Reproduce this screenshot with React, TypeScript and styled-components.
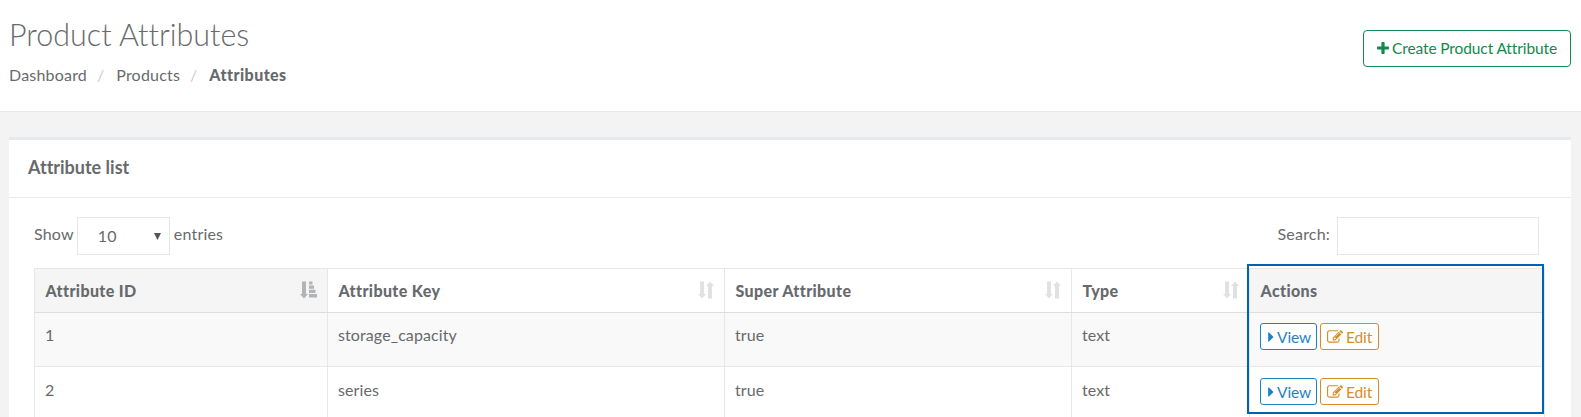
import React from "react";
import styled, { createGlobalStyle } from "styled-components";

const GlobalStyle = createGlobalStyle`
  *, *::before, *::after { box-sizing: border-box; }
  html, body { margin: 0; height: 100%; overflow: hidden; }
  body {
    background: #f3f3f4;
    color: #676a6c;
    font-family: Lato, "Liberation Sans", sans-serif;
    font-size: 16px;
    line-height: 20px;
    font-variant-ligatures: none;
  }
  #root { height: 100%; overflow: hidden; }
`;

const Page = styled.div`
  display: flex;
  flex-direction: column;
  height: 100vh;
  overflow: hidden;
`;

const Header = styled.header`
  display: flex;
  flex: none;
  justify-content: space-between;
  height: 112px;
  padding: 0 10px 0 9px;
  background: #fff;
  border-bottom: 1px solid #e7eaec;
`;

const PageTitle = styled.h1`
  margin: 16px 0 12px;
  font-size: 30.500px;
  line-height: 37px;
  font-weight: 300;
`;

const Breadcrumb = styled.ol`
  display: flex;
  margin: 0;
  padding: 0;
  list-style: none;
  li + li::before {
    content: "/";
    padding: 0 12px 0 10px;
    color: #ccc;
    font-weight: 400;
    letter-spacing: 0;
  }
`;

const Crumb = styled.li<{ $active?: boolean }>`
  font-weight: ${(p) => (p.$active ? 900 : 400)};
  letter-spacing: ${(p) => (p.$active ? 0.45 : 0.2)}px;
`;

const CreateButton = styled.button`
  display: flex;
  align-items: center;
  gap: 3px;
  width: 208px;
  height: 37px;
  margin-top: 30px;
  padding: 0 12px 2px 13px;
  border: 1px solid #14884e;
  border-radius: 4px;
  background: #fff;
  color: #14884e;
  font: inherit;
  font-size: 15.500px;
  letter-spacing: -0.11px;
  font-variant-ligatures: none;
  white-space: nowrap;
`;

const Panel = styled.section`
  flex: 1;
  min-height: 0;
  overflow: hidden;
  margin: 25px 10px 0 9px;
  background: #fff;
  border-top: 3px solid #e7eaec;
`;

const PanelTitle = styled.h2`
  margin: 0;
  height: 58px;
  padding: 16px 19px;
  border-bottom: 1px solid #e7eaec;
  font-size: 18px;
  line-height: 23px;
  font-weight: 700;
`;

const Toolbar = styled.div`
  display: flex;
  justify-content: space-between;
  height: 70px;
  padding: 19px 32px 0 25px;
`;

const Label = styled.label`
  display: flex;
  height: 38px;
  line-height: 34px;
  letter-spacing: 0.2px;
`;

const LengthSelect = styled.div`
  display: flex;
  justify-content: space-between;
  width: 93px;
  height: 38px;
  margin: 0 4px 0 3px;
  padding: 1px 7px 0 20px;
  border: 1px solid #e5e6e7;
`;

const SearchInput = styled.input`
  width: 202px;
  height: 38px;
  margin-left: 7px;
  border: 1px solid #e5e6e7;
  background: #fff;
`;

const TableWrap = styled.div`
  position: relative;
  width: 1511px;
  margin-left: 25px;
`;

const Table = styled.table`
  width: 1511px;
  table-layout: fixed;
  border-collapse: collapse;
  text-align: left;
`;

const HeadCell = styled.th<{ $shaded?: boolean }>`
  height: 44px;
  padding: 0 10px 0 10.500px;
  border: 1px solid #e7e7e7;
  border-bottom-color: #ddd;
  background: ${(p) => (p.$shaded ? "#f5f5f6" : "#fff")};
  font-weight: 900;
  letter-spacing: 0.38px;
`;

const HeadContent = styled.div`
  display: flex;
  align-items: center;
  justify-content: space-between;
  height: 42px;
`;

const Cell = styled.td`
  height: 54px;
  padding: 12px 10px 0;
  border: 1px solid #e7e7e7;
  vertical-align: top;
  letter-spacing: 0.1px;
`;

const Row = styled.tr`
  height: 54px;
  &:nth-child(odd) { background: #f9f9f9; }
  &:nth-child(even) ${Cell} { padding-top: 13px; }
`;

const Actions = styled.div`
  display: flex;
  gap: 3px;
  margin-top: -2px;
`;

const ActionButton = styled.button<{ $color: string; $width: number }>`
  display: flex;
  align-items: center;
  gap: 3px;
  width: ${(p) => p.$width}px;
  height: 27px;
  padding: 1px 6px 0;
  border: 1px solid ${(p) => p.$color};
  border-radius: 3px;
  background: #fff;
  color: ${(p) => p.$color};
  font: inherit;
  font-size: 15.500px;
  letter-spacing: -0.1px;
  line-height: 20px;
`;

const Highlight = styled.div`
  position: absolute;
  top: -4px;
  left: 1213px;
  width: 297px;
  height: 150px;
  border: 2px solid #0063b1;
`;

const SortSvg = styled.svg`
  flex: none;
  margin-top: -2px;
`;

const SortBoth = () => (
  <SortSvg width="16" height="18" viewBox="0 0 16 18" fill="#e0e1e2">
    <path d="M2 .5h4v12.500h2L4 17.500 0 13h2zM12 .5l4 4.500h-2v12.500h-4V5H8z" />
  </SortSvg>
);

const SortAsc = () => (
  <SortSvg width="17" height="18" viewBox="0 0 17 18" fill="#b3b4b6">
    <path d="M2 .5h4v12.500h2L4 17.500 0 13h2zM9 .5h3.500v3H9zM9 4.500h5v3.200H9zM9 8.700h6.500v3.300H9zM9 13h8v3.500H9z" />
  </SortSvg>
);

const Glyph = styled.svg`
  flex: none;
  fill: currentColor;
`;

const PlusIcon = () => (
  <Glyph width="12" height="14" viewBox="192 0 1408 1664">
    <path d="M1600 736v192q0 40-28 68t-68 28h-416v416q0 40-28 68t-68 28h-192q-40 0-68-28t-28-68v-416h-416q-40 0-68-28t-28-68v-192q0-40 28-68t68-28h416v-416q0-40 28-68t68-28h192q40 0 68 28t28 68v416h416q40 0 68 28t28 68z" />
  </Glyph>
);

const CaretIcon = () => (
  <Glyph width="7" height="16" viewBox="448 0 784 1792">
    <path d="M1152 896q0 26-19 45l-448 448q-19 19-45 19t-45-19-19-45v-896q0-26 19-45t45-19 45 19l448 448q19 19 19 45z" />
  </Glyph>
);

const EditIcon = () => (
  <Glyph width="16" height="16" viewBox="0 0 1792 1792">
    <path d="M888 1184l116-116-152-152-116 116v56h96v96h56zm440-720q-16-16-33 1l-350 350q-17 17-1 33t33-1l350-350q17-17 1-33zm80 594v190q0 119-84.500 203.500t-203.500 84.500h-832q-119 0-203.500-84.500t-84.500-203.500v-832q0-119 84.500-203.500t203.500-84.500h832q63 0 117 25 15 7 18 23 3 17-9 29l-49 49q-14 14-32 8-23-6-45-6h-832q-66 0-113 47t-47 113v832q0 66 47 113t113 47h832q66 0 113-47t47-113v-126q0-13 9-22l64-64q15-15 35-7t20 29zm-96-738l288 288-672 672h-288v-288zm444 132l-92 92-288-288 92-92q28-28 68-28t68 28l152 152q28 28 28 68t-28 68z" />
  </Glyph>
);

const ArrowIcon = styled.svg`
  margin-top: 14px;
`;

const rows = [
  { id: 1, key: "storage_capacity", superAttribute: "true", type: "text" },
  { id: 2, key: "series", superAttribute: "true", type: "text" },
];

export default function App() {
  return (
    <Page>
      <GlobalStyle />
      <Header>
        <div>
          <PageTitle>Product Attributes</PageTitle>
          <Breadcrumb>
            <Crumb>Dashboard</Crumb>
            <Crumb>Products</Crumb>
            <Crumb $active>Attributes</Crumb>
          </Breadcrumb>
        </div>
        <CreateButton><PlusIcon />Create Product Attribute</CreateButton>
      </Header>
      <Panel>
        <PanelTitle>Attribute list</PanelTitle>
        <Toolbar>
          <Label>
            Show
            <LengthSelect>
              10
              <ArrowIcon width="9" height="8" viewBox="0 0 9 8" fill="#555">
                <path d="M1 0h7L4.500 7z" />
              </ArrowIcon>
            </LengthSelect>
            entries
          </Label>
          <Label>Search:<SearchInput /></Label>
        </Toolbar>
        <TableWrap>
          <Table>
            <colgroup>
              <col width="293" />
              <col width="397" />
              <col width="347" />
              <col width="178" />
              <col width="295" />
            </colgroup>
            <thead>
              <tr>
                <HeadCell $shaded><HeadContent>Attribute ID<SortAsc /></HeadContent></HeadCell>
                <HeadCell><HeadContent>Attribute Key<SortBoth /></HeadContent></HeadCell>
                <HeadCell><HeadContent>Super Attribute<SortBoth /></HeadContent></HeadCell>
                <HeadCell><HeadContent>Type<SortBoth /></HeadContent></HeadCell>
                <HeadCell $shaded><HeadContent>Actions</HeadContent></HeadCell>
              </tr>
            </thead>
            <tbody>
              {rows.map((r) => (
                <Row key={r.id}>
                  <Cell>{r.id}</Cell>
                  <Cell>{r.key}</Cell>
                  <Cell>{r.superAttribute}</Cell>
                  <Cell>{r.type}</Cell>
                  <Cell>
                    <Actions>
                      <ActionButton $color="#1c84c6" $width={57}><CaretIcon />View</ActionButton>
                      <ActionButton $color="#d58e27" $width={59}><EditIcon />Edit</ActionButton>
                    </Actions>
                  </Cell>
                </Row>
              ))}
            </tbody>
          </Table>
          <Highlight />
        </TableWrap>
      </Panel>
    </Page>
  );
}
